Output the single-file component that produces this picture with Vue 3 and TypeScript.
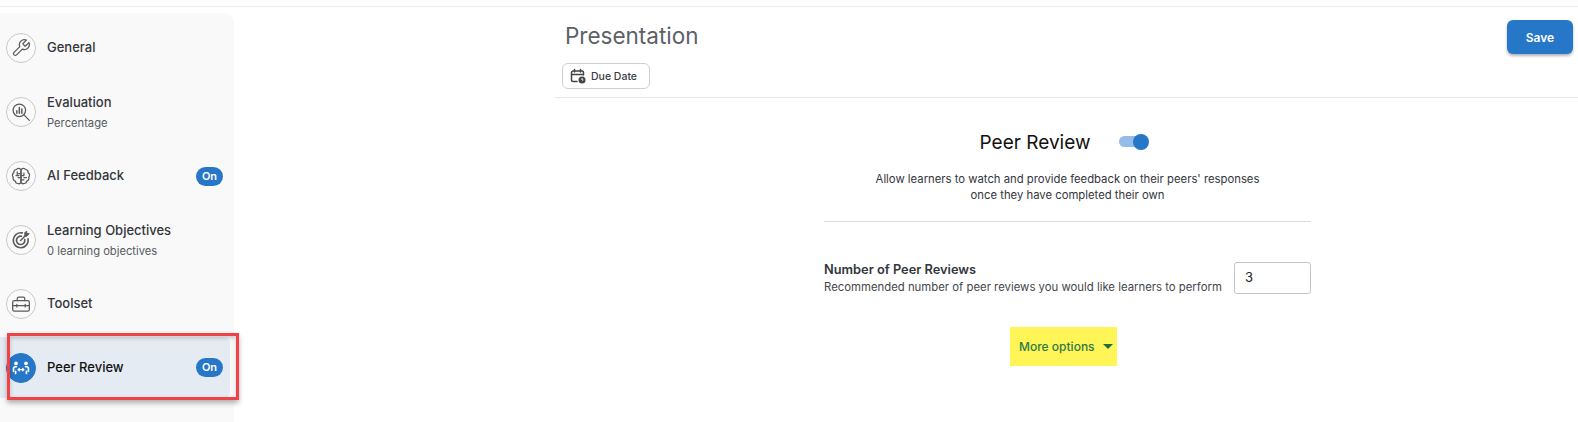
<script setup lang="ts">
interface Item { key: string; title: string; sub?: string; on?: boolean; active?: boolean }
const items: Item[] = [
  { key: 'general', title: 'General' },
  { key: 'evaluation', title: 'Evaluation', sub: 'Percentage' },
  { key: 'ai', title: 'AI Feedback', on: true },
  { key: 'objectives', title: 'Learning Objectives', sub: '0 learning objectives' },
  { key: 'toolset', title: 'Toolset' },
  { key: 'peer', title: 'Peer Review', on: true, active: true },
]
</script>

<template>
  <div class="page">
    <div class="topbar"></div>
    <div class="body">
      <aside class="sidebar">
        <div v-for="item in items" :key="item.key" class="item" :class="{ active: item.active }">
          <span class="circle">
            <svg viewBox="0 0 24 24" width="20" height="20" fill="none" stroke="currentColor" stroke-width="1.5" stroke-linecap="round" stroke-linejoin="round">
              <template v-if="item.key === 'general'">
                <path d="M14.7 6.3a1 1 0 0 0 0 1.4l1.6 1.6a1 1 0 0 0 1.4 0l3.8-3.8a6 6 0 0 1-7.9 7.9l-6.9 6.9a2.1 2.1 0 0 1-3-3l6.9-6.9a6 6 0 0 1 7.900-7.900z" />
              </template>
              <template v-else-if="item.key === 'evaluation'">
                <circle cx="10" cy="10" r="7.500" />
                <path d="M15.500 15.500L22 22" />
                <path d="M7 13.500v-3M10 13.500V6.500M13 13.500V8.500" stroke-width="1.800" />
              </template>
              <template v-else-if="item.key === 'ai'">
                <path d="M12 5a3 3 0 0 0-5.500-.8A3.200 3.200 0 0 0 3.500 8a3.500 3.500 0 0 0-.8 5.500A3.300 3.300 0 0 0 5.200 18a3.100 3.100 0 0 0 3 3A3 3 0 0 0 12 19.500z" />
                <path d="M12 5a3 3 0 0 1 5.500-.8A3.200 3.200 0 0 1 20.500 8a3.500 3.500 0 0 1 .8 5.500A3.300 3.300 0 0 1 18.800 18a3.100 3.100 0 0 1-3 3A3 3 0 0 1 12 19.500z" />
                <path d="M12 9H9M7.500 7v4.500M12 14H8.500M6 11.500h3.500M12 11.500h3.500v-3M12 16.500h3.500M15.500 14h3" />
              </template>
              <template v-else-if="item.key === 'objectives'">
                <path d="M20.500 10.500A9 9 0 1 1 13.500 3.500" stroke-width="2" />
                <path d="M16.500 11.500A5 5 0 1 1 12.500 7.500" stroke-width="2" />
                <path d="M11.500 12.500L18 6" stroke-width="1.800" />
                <path d="M16.500 6.500V3l2.500-1.500v2.800h3L19 7.500z" fill="currentColor" stroke-width="1" />
              </template>
              <template v-else-if="item.key === 'toolset'">
                <rect x="2" y="8" width="20" height="12.500" rx="2" />
                <path d="M7.500 8V5.500A1.800 1.800 0 0 1 9.300 3.700h5.400a1.800 1.800 0 0 1 1.800 1.800V8M2 14h20M7 12.500v3M17 12.500v3" />
              </template>
              <template v-else>
                <circle cx="6" cy="6.500" r="2.200" fill="currentColor" stroke="none" />
                <circle cx="18" cy="6.500" r="2.200" fill="currentColor" stroke="none" />
                <path d="M3 16v-3.500c0-1.300.8-2 2-2h1.500M20.900 16v-3.500c0-1.300-.8-2-2-2h-1.500M5.500 18.500v-2.500M18.500 18.500v-2.500" stroke-width="2" />
                <path d="M8.500 14h7M10 12.500L8.500 14l1.500 1.500M14 12.500l1.500 1.500-1.500 1.500" stroke-width="1.500" />
              </template>
            </svg>
          </span>
          <div class="labels" :class="{ single: !item.sub }">
            <div class="title">{{ item.title }}</div>
            <div v-if="item.sub" class="sub">{{ item.sub }}</div>
          </div>
          <span v-if="item.on" class="badge">On</span>
        </div>
        <div class="annotation"></div>
      </aside>

      <main class="main">
        <header class="header">
          <div class="header-left">
            <h1 class="heading">Presentation</h1>
            <button class="due" type="button">
              <svg viewBox="0 0 16 16" width="16" height="16" fill="none" stroke="#444" stroke-width="1.500" stroke-linecap="round">
                <path d="M7 13.500H3A1.500 1.500 0 0 1 1.500 12V4.500A1.500 1.500 0 0 1 3 3h9a1.500 1.500 0 0 1 1.500 1.500V7M1.500 6.500h12M4.500 1.500v2.500M10.500 1.500v2.500" />
                <circle cx="12" cy="12" r="3.500" fill="#444" stroke="none" />
                <path d="M12 10.500V12h1" stroke="#fff" stroke-width="1" />
              </svg>
              <span>Due Date</span>
            </button>
          </div>
          <button class="save" type="button">Save</button>
        </header>

        <section class="content">
          <div class="title-row">
            <h2 class="peer-title">Peer Review</h2>
            <span class="toggle"><span class="track"></span><span class="knob"></span></span>
          </div>
          <p class="desc">Allow learners to watch and provide feedback on their peers' responses<br />once they have completed their own</p>
          <div class="divider"></div>
          <div class="field">
            <div class="field-text">
              <div class="field-title">Number of Peer Reviews</div>
              <div class="field-sub">Recommended number of peer reviews you would like learners to perform</div>
            </div>
            <div class="input">3</div>
          </div>
          <div class="more-wrap">
            <div class="more">
              <span>More options</span>
              <span class="caret"></span>
            </div>
          </div>
        </section>
      </main>
    </div>
  </div>
</template>

<style>
html, body { margin: 0; background: #fff; }
</style>

<style scoped>
.page {
  width: 1578px;
  height: 422px;
  overflow: hidden;
  font-family: Inter, "Liberation Sans", sans-serif;
  color: #2f3237;
  background: #fff;
}
.topbar { height: 6px; border-bottom: 1px solid #ececec; }
.body { display: flex; }
.sidebar {
  position: relative;
  flex: none;
  width: 234px;
  height: 420px;
  margin-top: 6px;
  padding-top: 3px;
  box-sizing: border-box;
  background: #f9f9f9;
  border-top-right-radius: 10px;
}
.item {
  display: flex;
  align-items: center;
  height: 64px;
  padding: 0 11px 0 6px;
  box-sizing: border-box;
}
.circle {
  flex: none;
  display: flex;
  align-items: center;
  justify-content: center;
  width: 30px;
  height: 30px;
  border: 1px solid #c8c8c8;
  border-radius: 50%;
  box-sizing: border-box;
  color: #5a5a5a;
  background: #fafafa;
}
.labels { flex: 1; margin-left: 11px; padding-bottom: 1px; }
.labels.single { padding-bottom: 2px; }
.title { font-size: 13px; line-height: 18px; font-weight: 500; color: #33363b; }
.sub { font-size: 11.200px; line-height: 14px; margin-top: 5px; color: #555a60; }
.badge {
  width: 27px;
  height: 19px;
  border-radius: 10px;
  background: #2677c7;
  color: #fff;
  font-size: 11px;
  font-weight: 600;
  line-height: 18px;
  text-align: center;
}
.item.active {
  width: 230px;
  margin-top: 1px;
  background: #e4ebf3;
  border-radius: 0 6px 6px 0;
  padding-right: 7px;
  height: 61px;
}
.item.active .circle { background: #2677c7; border-color: #2677c7; color: #fff; }
.item.active .title { color: #111; }
.annotation {
  position: absolute;
  left: 7px;
  top: 320px;
  width: 232px;
  height: 67px;
  box-sizing: border-box;
  border: 3px solid #f04347;
  box-shadow: 0 3px 5px rgba(0, 0, 0, 0.3), inset 0 2px 4px rgba(0, 0, 0, 0.2);
}
.main { flex: 1; margin-left: 321px; }
.header {
  display: flex;
  justify-content: space-between;
  height: 91px;
  box-sizing: border-box;
  border-bottom: 1px solid #e8e8e8;
  padding: 12px 5px 0 7px;
}
.heading {
  margin: 0 0 11px 3px;
  font-size: 22.500px;
  line-height: 33px;
  font-weight: 400;
  color: #5d6167;
}
.due {
  display: flex;
  align-items: center;
  gap: 5px;
  width: 88px;
  height: 26px;
  padding: 0 0 0 7px;
  border: 1px solid #cfcfcf;
  border-radius: 6px;
  background: #fff;
  font: 500 10.500px Inter, sans-serif;
  color: #3a3d42;
  box-sizing: border-box;
}
.save {
  width: 66px;
  height: 34px;
  margin-top: 1px;
  border: none;
  border-radius: 6px;
  background: #2677c7;
  color: #fff;
  font: 600 12px Inter, sans-serif;
  box-shadow: 0 2px 3px rgba(0, 0, 0, 0.3);
}
.content { width: 487px; margin-left: 269px; }
.title-row {
  display: flex;
  align-items: center;
  justify-content: center;
  height: 30px;
  margin-top: 29px;
  gap: 29px;
  padding-right: 6px;
}
.peer-title { margin: 0; font-size: 19px; font-weight: 400; color: #111; }
.toggle { position: relative; width: 30px; height: 16px; display: block; }
.track { position: absolute; left: 0; top: 2px; width: 28px; height: 11px; border-radius: 6px; background: #93bce6; }
.knob { position: absolute; right: 0; top: 0; width: 16px; height: 16px; border-radius: 50%; background: #2677c7; }
.desc {
  margin: 14px 0 0;
  font-size: 11.300px;
  line-height: 16px;
  text-align: center;
  color: #33363b;
}
.divider { height: 1px; background: #dcdcdc; margin-top: 18px; }
.field { display: flex; justify-content: space-between; align-items: center; margin-top: 40px; }
.field-title { font-size: 12.800px; font-weight: 600; line-height: 16px; margin-bottom: 2px; color: #33363b; }
.field-sub { font-size: 11.350px; line-height: 14px; color: #43464b; }
.input {
  width: 77px;
  height: 32px;
  box-sizing: border-box;
  border: 1px solid #c4c4c4;
  border-radius: 3px;
  padding: 0 10px;
  font-size: 13px;
  line-height: 28px;
  color: #222;
}
.more-wrap { display: flex; justify-content: center; margin-top: 33px; padding-right: 8px; }
.more {
  display: flex;
  align-items: center;
  gap: 8px;
  width: 107px;
  height: 39px;
  padding: 0 0 1px 9px;
  box-sizing: border-box;
  background: #fff556;
  color: #2e7a4a;
  font-size: 12px;
  font-weight: 500;
}
.caret {
  width: 0;
  height: 0;
  border-left: 5.500px solid transparent;
  border-right: 5.500px solid transparent;
  border-top: 5px solid #1f6e43;
}
</style>
